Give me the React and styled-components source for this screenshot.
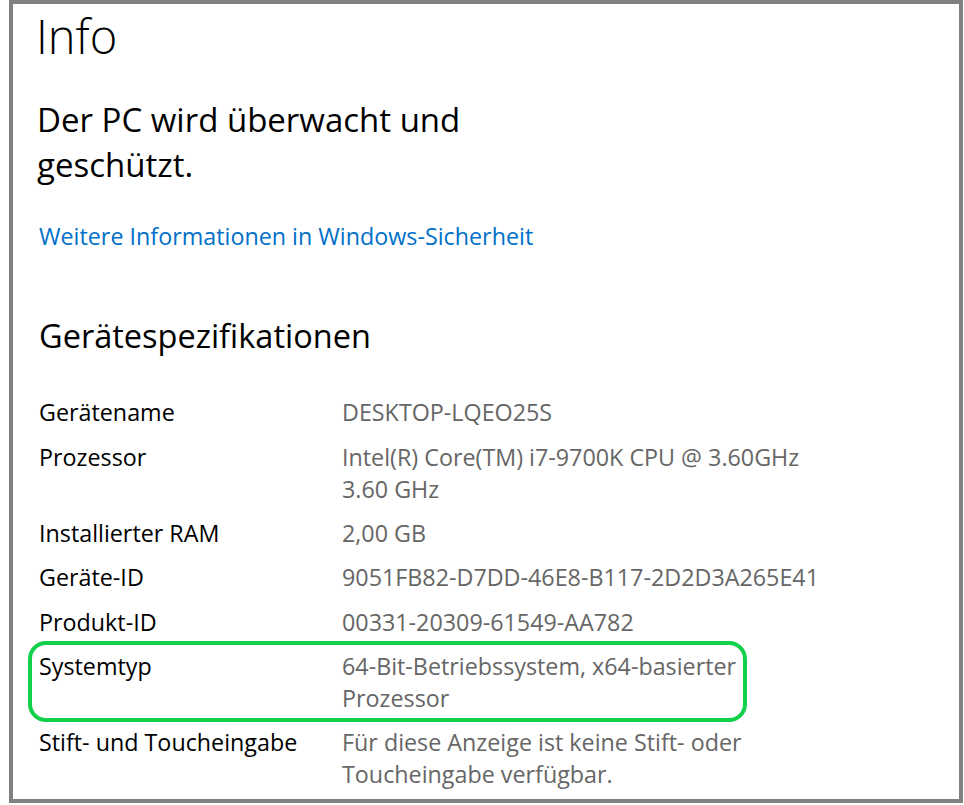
import React from 'react'
import styled, { createGlobalStyle } from 'styled-components';

const specs = [
  { label: 'Gerätename', value: ['DESKTOP-LQEO25S'] },
  { label: 'Prozessor', value: ['Intel(R) Core(TM) i7-9700K CPU @ 3.60GHz', '3.60 GHz'] },
  { label: 'Installierter RAM', value: ['2,00 GB'] },
  { label: 'Geräte-ID', value: ['9051FB82-D7DD-46E8-B117-2D2D3A265E41'] },
  { label: 'Produkt-ID', value: ['00331-20309-61549-AA782'] },
  { label: 'Systemtyp', value: ['64-Bit-Betriebssystem, x64-basierter', 'Prozessor'], marked: true },
  { label: 'Stift- und Toucheingabe', value: ['Für diese Anzeige ist keine Stift- oder', 'Toucheingabe verfügbar.'] },
];

const App = () => {
  return (
    <>
      <GlobalStyle />
      <Frame>
        <Title>Info</Title>
        <Status>Der PC wird überwacht und geschützt.</Status>
        <Link href="#">Weitere Informationen in Windows-Sicherheit</Link>
        <Subtitle>Gerätespezifikationen</Subtitle>
        <SpecList>
          {specs.map((s) => (
            <SpecRow key={s.label} $marked={s.marked}>
              <Label>{s.label}</Label>
              <Value>
                {s.value.map((line) => (
                  <span key={line}>{line}</span>
                ))}
              </Value>
            </SpecRow>
          ))}
        </SpecList>
      </Frame>
    </>
  )
};

const GlobalStyle = createGlobalStyle`
  body {
    margin: 0;
    background: #fff;
    font-family: "Open Sans", "Noto Sans", sans-serif;
    -webkit-font-smoothing: antialiased;
  }
`

const Frame = styled.main`
  box-sizing: border-box;
  margin-left: 9px;
  width: 954px;
  height: 803px;
  border: 4px solid #808080;
  padding: 0 0 0 26px;
  display: flex;
  flex-direction: column;
  align-items: flex-start;
  overflow: hidden;
  color: #000;
`

const Title = styled.h1`
  margin: 1.8px 0 0 -3px;
  font-size: 47px;
  font-weight: 300;
  line-height: 60px;
`

const Status = styled.p`
  margin: 31.7px 0 0 -2px;
  max-width: 480px;
  font-size: 33px;
  line-height: 45px;
`

const Link = styled.a`
  margin-top: 33px;
  font-size: 23.3px;
  line-height: 32px;
  color: #0070c9;
  text-decoration: none;
`

const Subtitle = styled.h2`
  margin: 63.4px 0 0;
  font-size: 32.5px;
  font-weight: 400;
  line-height: 40px;
`

const SpecList = styled.div`
  margin-top: 40.6px;
  display: flex;
  flex-direction: column;
  gap: 12.3px;
`

const SpecRow = styled.div`
  position: relative;
  display: grid;
  grid-template-columns: 303px 1fr;
  font-size: 23.3px;
  line-height: 32px;

  ${({ $marked }) => $marked && `
    &::before {
      content: '';
      position: absolute;
      left: -11px;
      top: -9px;
      bottom: -8px;
      width: 719px;
      box-sizing: border-box;
      border: 4px solid #12d04a;
      border-radius: 18px;
    }
  `}
`

const Label = styled.div`
  color: #000;
`

const Value = styled.div`
  display: flex;
  flex-direction: column;
  color: #666;
`

export default App
